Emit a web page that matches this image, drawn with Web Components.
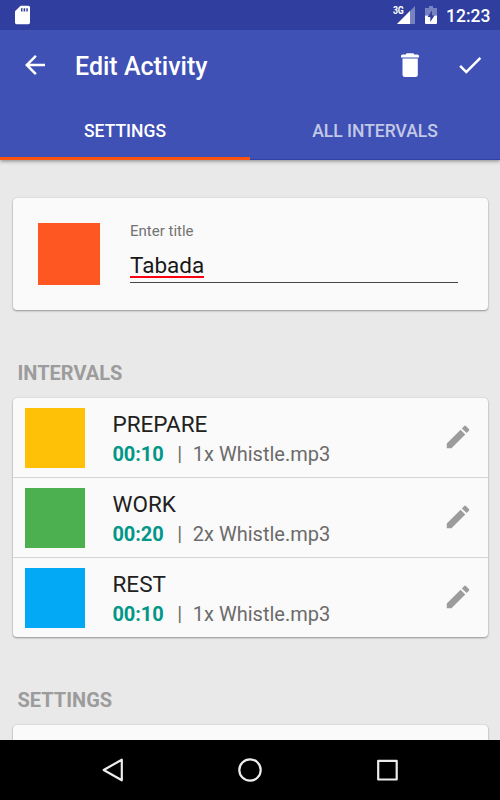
<!DOCTYPE html>
<html lang="en">
<head>
<meta charset="utf-8">
<title>Edit Activity</title>
<style>
html, body { margin: 0; height: 100%; }
body { font-family: Roboto, "Liberation Sans", sans-serif; overflow: hidden; }
</style>
</head>
<body>
<activity-screen></activity-screen>
<script>
const define = (name, html) => {
  const template = document.createElement('template');
  template.innerHTML = html;
  customElements.define(name, class extends HTMLElement {
    constructor() {
      super();
      this.attachShadow({ mode: 'open' }).append(template.content.cloneNode(true));
    }
  });
};

define('status-bar', `
<style>
:host { display: flex; align-items: center; box-sizing: border-box; height: 30px; padding: 0 10px 0 15px; background: #303f9f; color: #fff; }
svg { display: block; flex: none; }
.space { flex: 1; }
.net { font-size: 10px; line-height: 10px; font-weight: 700; width: 12px; transform: scaleX(.88); transform-origin: 0 0; align-self: flex-start; margin: 6px -7.5px 0 0; letter-spacing: -.3px; }
.battery { margin-left: 10px; }
.clock { width: 44px; margin-left: 9px; font-size: 17.5px; line-height: 30px; font-weight: 500; white-space: nowrap; padding-top: 2px; }
</style>
<svg width="15" height="20" viewBox="0 0 15 20"><path fill="#fff" fill-rule="evenodd" d="M5.6.7H13.400Q15 .7 15 2.200V17.600Q15 19.200 13.400 19.200H1.600Q0 19.200 0 17.600V6.300ZM6 3.200V6.400H7.500V3.200ZM8.600 3.200V6.400H10.200V3.200ZM11.300 3.200V6.400H12.800V3.200Z"/></svg>
<span class="space"></span>
<span class="net">3G</span>
<svg width="18" height="18" viewBox="0 0 18 18"><path fill="#fff" fill-opacity=".35" d="M18 0V18H0Z"/><path fill="#fff" d="M13 5V18H0Z"/></svg>
<svg class="battery" width="12" height="18" viewBox="0 0 12 18"><path fill="#fff" fill-opacity=".35" d="M4 0H8V2H12V9.500H0V2H4Z"/><path fill="#fff" d="M0 9.500H12V17Q12 18 11 18H1Q0 18 0 17Z"/><path fill="#303f9f" d="M7 4.500 2.600 11H5.300V16L9.600 9.300H7Z"/></svg>
<span class="clock">12:23</span>`);

define('app-bar', `
<style>
:host { display: flex; align-items: center; box-sizing: border-box; height: 70px; padding: 0 15px 0 20px; color: #fff; }
svg { display: block; fill: currentColor; flex: none; }
.title { flex: 1; margin-left: 25px; font-size: 25px; line-height: 30px; font-weight: 500; padding-top: 3px; }
.done { margin-left: 30px; }
</style>
<svg width="30" height="30" viewBox="0 0 24 24"><path d="M20 11H7.830l5.590-5.590L12 4l-8 8 8 8 1.410-1.410L7.830 13H20v-2z"/></svg>
<span class="title"><slot></slot></span>
<svg width="30" height="30" viewBox="0 0 30 30"><path d="M12.200 3.200H17.800Q19 3.200 19.200 4.500H22.500Q24 4.500 24 6V7.600H6V6Q6 4.500 7.500 4.500H10.800Q11 3.200 12.200 3.200ZM7.500 8.400H22.800V24.500Q22.800 27 20.300 27H10Q7.500 27 7.500 24.500Z"/></svg>
<svg class="done" width="30" height="30" viewBox="0 0 24 24"><path d="M9 16.200 4.800 12l-1.400 1.400L9 19 21 7l-1.400-1.400z"/></svg>`);

define('tab-item', `
<style>
:host { display: flex; flex: 1; box-sizing: border-box; height: 60px; align-items: center; justify-content: center; padding-top: 4px; border-bottom: 3px solid transparent; color: rgba(255,255,255,.7); font-size: 17.5px; font-weight: 500; white-space: nowrap; }
:host([selected]) { color: #fff; border-color: #ff5310; }
</style><slot></slot>`);

define('tab-strip', `
<style>:host { display: flex; height: 60px; box-shadow: inset 0 -1px #2d42a4; }</style><slot></slot>`);

define('paper-card', `
<style>
:host { display: block; background: #fafafa; border-radius: 4px; overflow: hidden; box-shadow: 0 1px 2px rgba(0,0,0,.34), 0 0 1.500px rgba(0,0,0,.18); }
</style><slot></slot>`);

define('title-field', `
<style>
:host { display: flex; box-sizing: border-box; height: 112.500px; padding: 24.500px 30px 0 25.500px; }
.swatch { width: 62px; height: 62px; margin-top: 1px; background: #ff5722; }
.field { flex: 1; margin-left: 30px; }
.label { font-size: 15px; line-height: 18px; color: #737373; }
.input { height: 42.500px; box-sizing: border-box; border-bottom: 1px solid #454545; padding-top: 11.500px; font-size: 22.5px; line-height: 27px; color: #171717; }
.word { display: block; width: 74px; height: 26.200px; box-sizing: border-box; border-bottom: 2px solid #ff0010; }
</style>
<div class="swatch"></div>
<div class="field"><div class="label"><slot name="label"></slot></div><div class="input"><span class="word"><slot></slot></span></div></div>`);

define('section-heading', `
<style>:host { display: block; padding-left: 5px; font-size: 20px; line-height: 24px; font-weight: 700; color: #9c9c9c; }</style><slot></slot>`);

define('interval-row', `
<style>
:host { display: flex; align-items: center; box-sizing: border-box; height: 80px; padding: 0 15px 0 12.500px; border-bottom: 1px solid #d5d5d5; }
:host(:last-child) { border: 0; height: 79px; }
.swatch { width: 60px; height: 60px; background: var(--swatch); }
.text { flex: 1; margin-left: 27.500px; padding-top: 2.600px; }
.name { font-size: 22.5px; line-height: 30px; color: #212121; }
.info { display: flex; font-size: 20px; line-height: 30px; color: #6b6b6b; white-space: pre; }
.time { font-weight: 700; color: #009688; letter-spacing: -.1px; }
.bar { margin: 0 10.600px 0 13.800px; }
svg { display: block; fill: #9c9c9c; margin-top: -1px; }
</style>
<div class="swatch"></div>
<div class="text"><div class="name"><slot name="name"></slot></div><div class="info"><span class="time"><slot name="time"></slot></span><span class="bar">|</span><slot></slot></div></div>
<svg width="30" height="30" viewBox="0 0 24 24"><path d="M3 17.250V21h3.750L17.810 9.940l-3.750-3.750L3 17.250zM20.710 7.040c.390-.390.390-1.020 0-1.410l-2.340-2.340c-.390-.390-1.020-.390-1.410 0l-1.830 1.830 3.750 3.750 1.830-1.830z"/></svg>`);

define('nav-bar', `
<style>
:host { display: flex; box-sizing: border-box; justify-content: space-between; align-items: center; height: 60px; padding: 0 98px; background: #000; }
svg { display: block; fill: none; stroke: #ececec; stroke-width: 2.2; stroke-linejoin: round; }
</style>
<svg width="30" height="30" viewBox="0 0 30 30"><path d="M23.800 4.700V25.300L5.700 15Z"/></svg>
<svg width="30" height="30" viewBox="0 0 30 30"><circle cx="15" cy="15" r="10.700"/></svg>
<svg width="30" height="30" viewBox="0 0 30 30"><rect x="6.200" y="5.800" width="18.500" height="18.700"/></svg>`);

define('activity-screen', `
<style>
:host { display: flex; flex-direction: column; height: 800px; width: 500px; background: #e9e9e9; overflow: hidden; }
header { flex: none; position: relative; background: #3f51b5; box-shadow: 0 1px 4px rgba(0,0,0,.45); }
main { flex: 1; min-height: 0; overflow: hidden; padding: 37.500px 12.500px 0; display: flex; flex-direction: column; }
main > * { flex: none; }
nav-bar { flex: none; }
.first { margin-top: 51px; }
.second { margin-top: 51px; }
.list { margin-top: 13px; }
.more { height: 90px; margin-top: 13px; }
</style>
<header>
<status-bar></status-bar>
<app-bar>Edit Activity</app-bar>
<tab-strip><tab-item selected>SETTINGS</tab-item><tab-item>ALL INTERVALS</tab-item></tab-strip>
</header>
<main>
<paper-card><title-field><span slot="label">Enter title</span>Tabada</title-field></paper-card>
<section-heading class="first">INTERVALS</section-heading>
<paper-card class="list">
<interval-row style="--swatch:#ffc107"><span slot="name">PREPARE</span><span slot="time">00:10</span>1x Whistle.mp3</interval-row>
<interval-row style="--swatch:#4caf50"><span slot="name">WORK</span><span slot="time">00:20</span>2x Whistle.mp3</interval-row>
<interval-row style="--swatch:#03a9f4"><span slot="name">REST</span><span slot="time">00:10</span>1x Whistle.mp3</interval-row>
</paper-card>
<section-heading class="second">SETTINGS</section-heading>
<paper-card class="more"></paper-card>
</main>
<nav-bar></nav-bar>`);
</script>
</body>
</html>
